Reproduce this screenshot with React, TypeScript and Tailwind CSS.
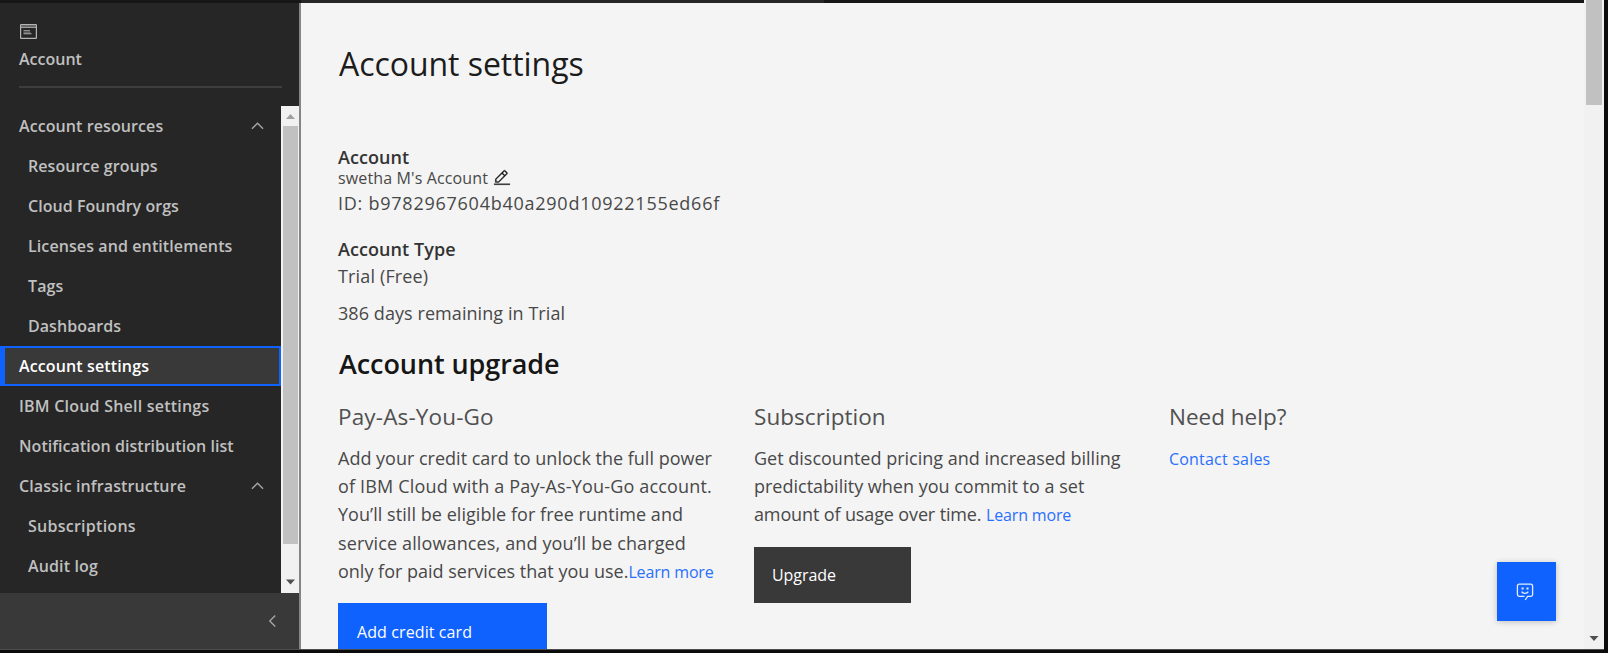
type NavItem = {
  label: string;
  tracking: string;
  nested?: boolean;
  active?: boolean;
  expandable?: boolean;
};

const navItems: NavItem[] = [
  { label: 'Account resources', tracking: 'tracking-[0.09px]', expandable: true },
  { label: 'Resource groups', tracking: 'tracking-[0.05px]', nested: true },
  { label: 'Cloud Foundry orgs', tracking: 'tracking-[0.04px]', nested: true },
  { label: 'Licenses and entitlements', tracking: 'tracking-[0.1px]', nested: true },
  { label: 'Tags', tracking: 'tracking-[0.1px]', nested: true },
  { label: 'Dashboards', tracking: 'tracking-[0.05px]', nested: true },
  { label: 'Account settings', tracking: 'tracking-[0.13px]', active: true },
  { label: 'IBM Cloud Shell settings', tracking: 'tracking-[0.22px]' },
  { label: 'Notification distribution list', tracking: 'tracking-[0.04px]' },
  { label: 'Classic infrastructure', tracking: 'tracking-[0.12px]', expandable: true },
  { label: 'Subscriptions', tracking: 'tracking-[0.26px]', nested: true },
  { label: 'Audit log', tracking: 'tracking-[0.14px]', nested: true },
];

function Chevron({ className }: { className: string }) {
  return (
    <svg viewBox="0 0 14 8" className={className} fill="none" stroke="#a8a8a8" strokeWidth="1.4">
      <path d="M1 7l6-6 6 6" />
    </svg>
  );
}

function AccountIcon() {
  return (
    <svg viewBox="0 0 17 15" className="h-[15px] w-[17px]" fill="none" stroke="#b4b4b4">
      <rect x="0.6" y="0.6" width="15.8" height="13.8" rx="0.5" strokeWidth="1.2" />
      <path d="M1 3.3h15" strokeWidth="1.1" />
      <path d="M1 2h15" strokeWidth="1.6" stroke="#707070" />
      <path d="M3.5 6.8h6.5M3.5 9.8h8" strokeWidth="1.1" />
      <path d="M3.5 8.3h7" strokeWidth="1" stroke="#777777" />
    </svg>
  );
}

function EditIcon() {
  return (
    <svg viewBox="0 0 32 32" className="size-[18px]" fill="#161616" stroke="#161616" strokeWidth="0.5">
      <path d="M2 26h28v2H2zM25.4 9c.8-.8.8-2 0-2.8l-3.6-3.6c-.8-.8-2-.8-2.8 0l-15 15V24h6.4l15-15zm-5-5L24 7.6l-3 3L17.4 7l3-3zM6 22v-3.6l10-10 3.6 3.6-10 10H6z" />
    </svg>
  );
}

function ChatIcon() {
  return (
    <svg viewBox="0 0 18 18" className="size-[18px]" fill="none" stroke="#e4edff" strokeWidth="1.3">
      <path d="M9.2 17l2.4-3.6h3.2a1.8 1.8 0 001.8-1.8V3a1.8 1.8 0 00-1.8-1.8H3.2A1.8 1.8 0 001.4 3v8.6a1.8 1.8 0 001.8 1.8h5.3" />
      <path d="M5.6 8.600c1.2 2.300 5.400 2.300 6.700 0" />
      <path d="M5.6 5.600h2M10.500 5.600h2" strokeWidth="2" />
    </svg>
  );
}

function Sidebar() {
  return (
    <aside className="flex w-[301px] shrink-0 flex-col border-r-2 border-[#858585] bg-[#262626] text-base font-semibold text-[#c0c0c0]">
      <div className="px-[19px] pt-[21px]">
        <div className="pl-[1px]">
          <AccountIcon />
        </div>
        <div className="mt-[10px] h-5 leading-5">Account</div>
        <div className="mt-[17px] h-[2px] w-[263px] bg-[#3d3d3d]" />
      </div>
      <div className="mt-[18px] flex h-[487px] shrink-0">
        <nav className="w-[281px]">
          {navItems.map((item) => (
            <div
              key={item.label}
              className={
                'flex h-10 items-center justify-between pr-[17px] whitespace-nowrap ' +
                (item.nested ? 'pl-[28px] ' : item.active ? '' : 'pl-[19px] ') +
                (item.active
                  ? 'border-2 border-l-[5px] border-[#0f62fe] bg-[#393939] pl-[14px] text-white'
                  : '')
              }
            >
              <span className={item.tracking}>{item.label}</span>
              {item.expandable && <Chevron className="h-[8px] w-[13px]" />}
            </div>
          ))}
        </nav>
        <div className="flex w-[18px] flex-col items-center bg-[#f1f1f1]">
          <svg viewBox="0 0 18 20" className="h-5 w-[18px]" fill="#a0a0a0">
            <path d="M5 13l4.500-5 4.500 5z" />
          </svg>
          <div className="h-[418px] w-[15px] bg-[#c1c1c1]" />
          <div className="flex-1" />
          <svg viewBox="0 0 18 20" className="h-5 w-[18px]" fill="#505050">
            <path d="M5 6.500h9l-4.500 5z" />
          </svg>
        </div>
      </div>
      <div className="flex flex-1 items-center justify-end bg-[#393939] pr-[20px]">
        <Chevron className="h-[8px] w-[13px] -rotate-90" />
      </div>
    </aside>
  );
}

function LearnMore() {
  return <a className="text-base tracking-[-0.15px] text-[#2a70fe]">Learn more</a>;
}

function Content() {
  return (
    <main className="min-w-0 flex-1 overflow-hidden bg-[#f4f4f4] pt-[41px] pl-[37px] text-lg whitespace-nowrap text-[#484848]">
      <h1 className="pl-[1px] text-[32px] leading-10 font-normal tracking-[-0.05px] text-[#1c1c1c]">Account settings</h1>
      <div className="mt-[63px] h-5 leading-5 font-semibold tracking-[0.05px] text-[#333333]">Account</div>
      <div className="mt-px flex h-5 items-center gap-[5px] text-base leading-5">
        <span className="tracking-[0.13px]">swetha M&apos;s Account</span>
        <EditIcon />
      </div>
      <div className="mt-[3px] h-6 leading-6 tracking-[0.75px]">ID: b9782967604b40a290d10922155ed66f</div>
      <div className="mt-[22px] h-6 leading-6 font-semibold tracking-[0.08px] text-[#333333]">Account Type</div>
      <div className="mt-[3px] h-6 leading-6 tracking-[0.15px]">Trial (Free)</div>
      <div className="mt-[13px] h-6 leading-6 tracking-[0.07px]">386 days remaining in Trial</div>
      <h2 className="mt-[21px] h-9 pl-[1px] text-[27px] leading-9 font-semibold tracking-[-0.08px] text-[#161616]">Account upgrade</h2>
      <div className="mt-[19px] flex">
        <section className="w-[415px] shrink-0">
          <h3 className="text-[22.5px] leading-8 font-normal tracking-[0.15px] text-[#505050]">Pay-As-You-Go</h3>
          <p className="mt-[11px] leading-[28.2px]">
            Add your credit card to unlock the full power
            <br />
            <span className="tracking-[0.17px]">of IBM Cloud with a Pay-As-You-Go account.</span>
            <br />
            <span className="tracking-[0.05px]">You’ll still be eligible for free runtime and</span>
            <br />
            <span className="tracking-[0.13px]">service allowances, and you’ll be charged</span>
            <br />
            only for paid services that you use.
            <LearnMore />
          </p>
          <button className="mt-[18px] flex h-14 w-[209px] items-center bg-[#0f62fe] pt-px pl-[19px] text-base font-medium tracking-[0.1px] text-white">
            Add credit card
          </button>
        </section>
        <section className="w-[415px] shrink-0 pl-[1px]">
          <h3 className="text-[22.5px] leading-8 font-normal tracking-[0.05px] text-[#505050]">Subscription</h3>
          <p className="mt-[11px] leading-[28.2px]">
            Get discounted pricing and increased billing
            <br />
            predictability when you commit to a set
            <br />
            <span className="tracking-[-0.13px]">amount of usage over time. </span>
            <LearnMore />
          </p>
          <button className="mt-[18px] flex h-14 w-[157px] items-center bg-[#393939] pt-px pl-[18px] text-base font-medium tracking-[-0.05px] text-white">
            Upgrade
          </button>
        </section>
        <section className="pl-[1px]">
          <h3 className="text-[22.5px] leading-8 font-normal text-[#505050]">Need help?</h3>
          <a className="mt-[12px] block text-base leading-7 tracking-[0.2px] text-[#2a70fe]">Contact sales</a>
        </section>
      </div>
    </main>
  );
}

export default function App() {
  return (
    <div className="relative flex h-[653px] w-[1608px] overflow-hidden bg-[#0b0b0b] font-['Open_Sans',sans-serif]">
      <div className="flex w-[1584px] shrink-0 flex-col">
        <div className="flex h-[3px] shrink-0">
          <div className="w-[301px] bg-[#161616]" />
          <div className="w-[523px] bg-[#262626]" />
          <div className="flex-1 bg-[#161616]" />
        </div>
        <div className="flex h-[646px] shrink-0">
          <Sidebar />
          <Content />
        </div>
        <div className="h-px shrink-0 bg-[#4d4d4d]" />
      </div>
      <div className="flex h-[650px] w-5 flex-col items-center border-b border-[#4d4d4d] bg-[#f1f1f1]">
        <div className="h-[105px] w-4 bg-[#c1c1c1]" />
        <div className="flex-1" />
        <svg viewBox="0 0 20 20" className="size-5" fill="#505050">
          <path d="M5.500 7h9L10 12z" />
        </svg>
      </div>
      <button className="absolute top-[562px] left-[1497px] flex size-[59px] items-center justify-center bg-[#0f62fe] pr-[3px] shadow-[0_1px_6px_rgba(0,0,0,0.22)]">
        <ChatIcon />
      </button>
    </div>
  );
}
